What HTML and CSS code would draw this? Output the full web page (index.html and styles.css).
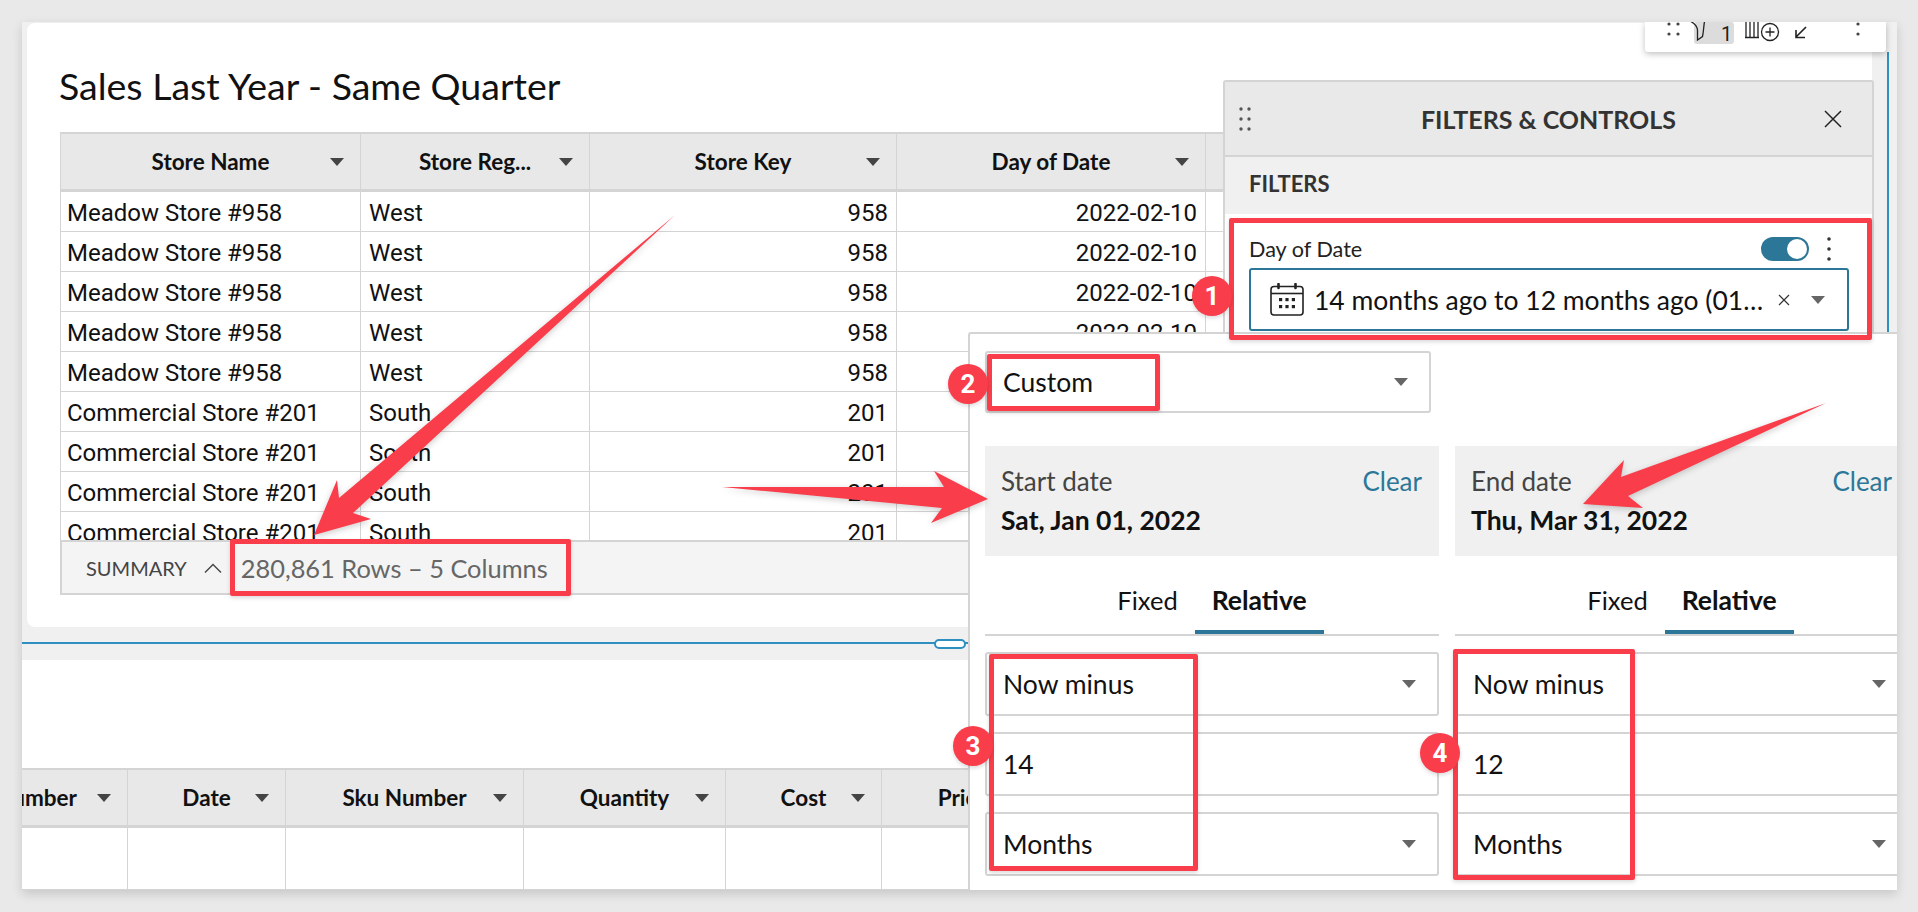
FILE: index.html
```html
<!DOCTYPE html>
<html lang="en">
  <head>
    <meta charset="UTF-8" />
    <title>Filters and controls</title>
    <link rel="stylesheet" href="styles.css">
  </head>
  <body>
    <div class="window">
      <div class="card">
        <h1 class="card-title">Sales Last Year - Same Quarter</h1>
        <div class="table-clip">
          <table class="grid grid-top">
            <thead>
              <tr>
                <th class="col-name">Store Name<i class="caret"></i></th>
                <th class="col-region">Store Reg...<i class="caret"></i></th>
                <th class="col-key">Store Key<i class="caret"></i></th>
                <th class="col-date">Day of Date<i class="caret"></i></th>
                <th></th>
              </tr>
            </thead>
            <tbody>
              <tr><td>Meadow Store #958</td><td>West</td><td class="num">958</td><td class="num">2022-02-10</td><td></td></tr>
              <tr><td>Meadow Store #958</td><td>West</td><td class="num">958</td><td class="num">2022-02-10</td><td></td></tr>
              <tr><td>Meadow Store #958</td><td>West</td><td class="num">958</td><td class="num">2022-02-10</td><td></td></tr>
              <tr><td>Meadow Store #958</td><td>West</td><td class="num">958</td><td class="num">2022-02-10</td><td></td></tr>
              <tr><td>Meadow Store #958</td><td>West</td><td class="num">958</td><td class="num">2022-02-10</td><td></td></tr>
              <tr><td>Commercial Store #201</td><td>South</td><td class="num">201</td><td class="num">2022-02-10</td><td></td></tr>
              <tr><td>Commercial Store #201</td><td>South</td><td class="num">201</td><td class="num">2022-02-10</td><td></td></tr>
              <tr><td>Commercial Store #201</td><td>South</td><td class="num">201</td><td class="num">2022-02-10</td><td></td></tr>
              <tr><td>Commercial Store #201</td><td>South</td><td class="num">201</td><td class="num">2022-02-10</td><td></td></tr>
            </tbody>
          </table>
        </div>
        <div class="summary">
          <span class="summary-label">SUMMARY</span>
          <svg class="summary-chevron" width="18" height="10" viewBox="0 0 18 10"><path d="M1 9.500 9 1.500l8 8" fill="none" stroke="#444" stroke-width="1.400"/></svg>
          <span class="summary-count">280,861 Rows – 5 Columns</span>
        </div>
      </div>

      <div class="divider">
        <div class="divider-line"></div>
        <div class="divider-handle"></div>
      </div>

      <div class="lower">
        <table class="grid grid-bottom">
          <thead>
            <tr>
              <th class="col-number">Number<i class="caret"></i></th>
              <th class="col-day">Date<i class="caret"></i></th>
              <th class="col-sku">Sku Number<i class="caret"></i></th>
              <th class="col-qty">Quantity<i class="caret"></i></th>
              <th class="col-cost">Cost<i class="caret"></i></th>
              <th class="col-price">Price<i class="caret"></i></th>
            </tr>
          </thead>
          <tbody>
            <tr><td></td><td></td><td></td><td></td><td></td><td></td></tr>
          </tbody>
        </table>
      </div>

      <div class="edge-line"></div>

      <div class="toolbar">
        <svg width="241" height="30" viewBox="0 0 241 30">
          <rect x="49" y="0" width="40" height="22" rx="3" fill="#dcdcdc"/>
          <g fill="#444">
            <circle cx="24" cy="2" r="1.600"/><circle cx="33" cy="2" r="1.600"/>
            <circle cx="24" cy="12" r="1.600"/><circle cx="33" cy="12" r="1.600"/>
            <circle cx="213" cy="2" r="1.600"/><circle cx="213" cy="12" r="1.600"/>
          </g>
          <g fill="none" stroke="#222" stroke-width="1.300">
            <path d="M43 -1c4 2 7 5 7.500 9v10l5-3.500c1-4 1-9 2-15" transform="translate(2 0)"/>
            <path d="M101 0v15M105 0v15M109 0v15M113 0v15M100 15.500h14"/>
            <circle cx="125" cy="10" r="8.500"/>
            <path d="M125 5.500v9M120.500 10h9"/>
            <path d="M161 5 151 15M151 8v7.500h9" stroke-width="1.600"/>
          </g>
          <text class="toolbar-count" x="76" y="19">1</text>
        </svg>
      </div>

      <div class="panel">
        <div class="panel-header">
          <svg class="grip" width="12" height="24" viewBox="0 0 12 24"><g fill="#555"><circle cx="2" cy="2" r="1.700"/><circle cx="10" cy="2" r="1.700"/><circle cx="2" cy="12" r="1.700"/><circle cx="10" cy="12" r="1.700"/><circle cx="2" cy="22" r="1.700"/><circle cx="10" cy="22" r="1.700"/></g></svg>
          <span class="panel-title">FILTERS &amp; CONTROLS</span>
          <svg class="panel-close" width="18" height="18" viewBox="0 0 18 18"><path d="M1 1l16 16M17 1 1 17" stroke="#222" stroke-width="1.500"/></svg>
        </div>
        <div class="panel-section">FILTERS</div>
        <div class="control">
          <div class="control-head">
            <span class="control-label">Day of Date</span>
            <span class="toggle"><span class="toggle-knob"></span></span>
            <svg class="kebab" width="6" height="24" viewBox="0 0 6 24"><g fill="#333"><circle cx="3" cy="2" r="1.800"/><circle cx="3" cy="12" r="1.800"/><circle cx="3" cy="22" r="1.800"/></g></svg>
          </div>
          <div class="control-select">
            <svg class="calendar" width="34" height="33" viewBox="0 0 34 33">
              <rect x="1" y="3.500" width="32" height="28.500" rx="3" fill="none" stroke="#222" stroke-width="1.600"/>
              <path d="M1 10.500h32" stroke="#222" stroke-width="1.600"/>
              <path d="M8.500 1v4M25.500 1v4" stroke="#222" stroke-width="2.600" stroke-linecap="round"/>
              <g fill="#222">
                <rect x="9" y="15" width="3.200" height="3.200"/><rect x="15.400" y="15" width="3.200" height="3.200"/><rect x="21.800" y="15" width="3.200" height="3.200"/>
                <rect x="9" y="22" width="3.200" height="3.200"/><rect x="15.400" y="22" width="3.200" height="3.200"/><rect x="21.800" y="22" width="3.200" height="3.200"/>
              </g>
            </svg>
            <span class="control-value">14 months ago to 12 months ago (01…</span>
            <svg class="control-clear" width="12" height="12" viewBox="0 0 12 12"><path d="M1 1l10 10M11 1 1 11" stroke="#333" stroke-width="1.200"/></svg>
            <i class="caret caret-soft control-caret"></i>
          </div>
        </div>
      </div>

      <div class="popover">
        <div class="select select-custom">Custom<i class="caret caret-soft"></i></div>
        <div class="range">
          <div class="range-col">
            <div class="date-box">
              <div class="date-box-head"><span class="date-label">Start date</span><span class="date-clear">Clear</span></div>
              <div class="date-value">Sat, Jan 01, 2022</div>
            </div>
            <div class="tabs"><span class="tab">Fixed</span><span class="tab tab-active">Relative</span></div>
            <div class="select">Now minus<i class="caret caret-soft"></i></div>
            <div class="select">14</div>
            <div class="select">Months<i class="caret caret-soft"></i></div>
          </div>
          <div class="range-col">
            <div class="date-box">
              <div class="date-box-head"><span class="date-label">End date</span><span class="date-clear">Clear</span></div>
              <div class="date-value">Thu, Mar 31, 2022</div>
            </div>
            <div class="tabs"><span class="tab">Fixed</span><span class="tab tab-active">Relative</span></div>
            <div class="select">Now minus<i class="caret caret-soft"></i></div>
            <div class="select">12</div>
            <div class="select">Months<i class="caret caret-soft"></i></div>
          </div>
        </div>
      </div>
    </div>

    <!-- annotations drawn over the screenshot -->
    <svg class="arrows" width="1918" height="912" viewBox="0 0 1918 912">
      <polygon points="675,215 353,513 371,519 314,535 337,480 339,498"/>
      <polygon points="722,487 944,487 934,471 988,499 931,523 942,508"/>
      <polygon points="1826,403 1628,496 1643,508 1583,504 1624,460 1621,477"/>
    </svg>
    <div class="mark mark-filter"></div>
    <div class="mark mark-summary"></div>
    <div class="mark mark-custom"></div>
    <div class="mark mark-start"></div>
    <div class="mark mark-end"></div>
    <div class="badge badge-1">1</div>
    <div class="badge badge-2">2</div>
    <div class="badge badge-3">3</div>
    <div class="badge badge-4">4</div>
  </body>
</html>
```

FILE: styles.css
```css
* {
  box-sizing: border-box;
}

html,
body {
  height: 912px;
  overflow: hidden;
}

body {
  margin: 0;
  position: relative;
  background: #e9e9e9;
  color: #111;
  font-family: "Lato", "Noto Sans", sans-serif;
}

.window {
  position: relative;
  margin: 22px 21px 0 22px;
  height: 868px;
  overflow: hidden;
  background: #f0f0f0;
  box-shadow: 0 4px 10px rgba(0, 0, 0, 0.15);
}

.card {
  margin: 1px 25px 0 5px;
  height: 604px;
  padding: 40px 22px 0 33px;
  background: #fff;
  border-radius: 8px;
}

.card-title {
  margin: 0 0 23px -1px;
  font-size: 37.500px;
  font-weight: 400;
  line-height: 46px;
}

.table-clip {
  height: 408px;
  overflow: hidden;
}

.grid {
  border-collapse: separate;
  border-spacing: 0;
  table-layout: fixed;
}

.grid th {
  position: relative;
  height: 60px;
  padding: 0;
  background: #e8e8e8;
  border-top: 2px solid #d4d4d4;
  border-right: 1px solid #d4d4d4;
  border-bottom: 3px solid #d4d4d4;
  font-size: 22.500px;
  font-weight: 700;
  text-align: center;
  white-space: nowrap;
}

.grid td {
  height: 40px;
  padding: 2px 8px 0 8px;
  background: #fff;
  border-right: 1px solid #d4d4d4;
  border-bottom: 1px solid #d4d4d4;
  font-family: "Roboto", sans-serif;
  font-size: 24px;
  white-space: nowrap;
}

.grid td:first-child {
  padding-left: 6px;
}

.grid-top {
  width: 1790px;
  border-left: 1px solid #d4d4d4;
}

.grid-top td.num {
  text-align: right;
}

.col-name { width: 300px; }
.col-region { width: 229px; }
.col-key { width: 307px; }
.col-date { width: 309px; }

.caret {
  position: absolute;
  top: 50%;
  right: 16px;
  margin-top: -4px;
  width: 0;
  height: 0;
  border-left: 7px solid transparent;
  border-right: 7px solid transparent;
  border-top: 8px solid #444;
}

.caret-soft {
  border-top-color: #666;
}

.summary {
  display: flex;
  align-items: center;
  height: 55px;
  padding-left: 24px;
  background: #f4f4f4;
  border: 2px solid #d4d4d4;
  border-right: none;
}

.summary-label {
  font-size: 20px;
  color: #444;
}

.summary-chevron {
  margin-left: 17px;
}

.summary-count {
  margin-left: 19px;
  font-size: 25.400px;
  color: #666;
}

.divider {
  position: relative;
  height: 33px;
  padding-top: 15px;
}

.divider-line {
  height: 2px;
  background: #2f8fc0;
}

.divider-handle {
  position: absolute;
  left: 912px;
  top: 12px;
  width: 32px;
  height: 10px;
  background: #fff;
  border: 2px solid #2f8fc0;
  border-radius: 5px;
}

.lower {
  height: 230px;
  padding-top: 108px;
  background: #fff;
}

.grid-bottom {
  width: 1100px;
  margin-left: -77px;
}

.grid-bottom td {
  height: 62px;
}

.col-number { width: 183px; }
.col-day { width: 158px; }
.col-sku { width: 238px; }
.col-qty { width: 202px; }
.col-cost { width: 156px; }
.col-price { width: 163px; }

.edge-line {
  position: absolute;
  top: 30px;
  left: 1865px;
  width: 2px;
  height: 290px;
  background: #2f8fc0;
}

.toolbar {
  position: absolute;
  top: 0;
  left: 1623px;
  width: 241px;
  height: 30px;
  background: #fff;
  border-radius: 0 0 3px 3px;
  box-shadow: 0 2px 6px rgba(0, 0, 0, 0.25);
}

.toolbar svg {
  display: block;
}

.toolbar-count {
  font-family: "Roboto", sans-serif;
  font-size: 20px;
  fill: #222;
}

.panel {
  position: absolute;
  top: 58px;
  left: 1201px;
  width: 651px;
  height: 260px;
  background: #fff;
  border: 2px solid #d4d4d4;
  border-bottom: none;
  border-radius: 3px 3px 0 0;
}

.panel-header {
  display: grid;
  grid-template-columns: 1fr auto 1fr;
  align-items: center;
  height: 75px;
  padding: 0 30px 0 30px;
  background: #e9e9e9;
  border-bottom: 2px solid #d4d4d4;
}

.grip {
  margin-left: -16px;
}

.panel-close {
  justify-self: end;
}

.panel-title {
  font-size: 25px;
  font-weight: 700;
  color: #333;
}

.panel-section {
  height: 57px;
  padding: 0 0 0 24px;
  background: #f0f0f0;
  font-size: 22px;
  font-weight: 700;
  line-height: 54px;
  color: #333;
}

.control {
  padding: 22px 23px 0 24px;
}

.control-head {
  display: flex;
  align-items: center;
  height: 26px;
  padding-right: 17px;
}

.control-label {
  flex: 1;
  font-size: 21.600px;
  color: #222;
}

.toggle {
  display: flex;
  justify-content: flex-end;
  align-items: center;
  width: 48px;
  height: 24px;
  padding-right: 2px;
  background: #2c7797;
  border-radius: 12px;
}

.toggle-knob {
  width: 20px;
  height: 20px;
  background: #fff;
  border-radius: 50%;
}

.kebab {
  margin-left: 17px;
}

.control-select {
  position: relative;
  display: flex;
  align-items: center;
  height: 63px;
  margin-top: 6px;
  padding-left: 19px;
  border: 2px solid #2c7797;
  border-radius: 3px;
}

.control-value {
  margin-left: 10px;
  font-size: 26.500px;
  white-space: nowrap;
}

.control-clear {
  position: absolute;
  left: 527px;
}

.control-caret {
  right: 22px;
}

.popover {
  position: absolute;
  top: 310px;
  left: 946px;
  right: 0;
  bottom: 0;
  overflow: hidden;
  padding: 17px 0 0 15px;
  background: #fff;
  border-top: 2px solid #d4d4d4;
  border-left: 2px solid #d4d4d4;
  border-radius: 3px 0 0 0;
}

.select {
  position: relative;
  display: flex;
  align-items: center;
  height: 64px;
  padding-left: 16px;
  border: 2px solid #d4d4d4;
  border-radius: 3px;
  font-size: 26.500px;
}

.select .caret {
  right: 21px;
}

.select-custom {
  width: 446px;
  height: 62px;
}

.range {
  display: flex;
  gap: 16px;
  width: 940px;
  margin-top: 33px;
}

.range-col {
  display: flex;
  flex-direction: column;
  gap: 16px;
  width: 454px;
}

.date-box {
  height: 110px;
  padding: 19px 17px 0 16px;
  background: #f0f0f0;
}

.date-box-head {
  display: flex;
  justify-content: space-between;
}

.date-label {
  font-size: 26px;
  color: #444;
}

.date-clear {
  font-size: 26px;
  color: #2c7797;
}

.date-value {
  margin-top: 7px;
  font-size: 26.500px;
  font-weight: 700;
}

.tabs {
  display: flex;
  justify-content: center;
  height: 64px;
  border-bottom: 2px solid #d4d4d4;
}

.tab {
  height: 62px;
  padding: 11px 17px 0;
  font-size: 25.500px;
  line-height: 34px;
}

.tab-active {
  font-size: 26.500px;
  font-weight: 700;
  border-bottom: 4px solid #2c7797;
}

/* annotation layer */
.arrows {
  position: absolute;
  top: 0;
  left: 0;
  fill: #f93d4a;
  filter: drop-shadow(0 2px 3px rgba(0, 0, 0, 0.2));
}

.mark {
  position: absolute;
  border: 5px solid #f93d4a;
  border-radius: 2px;
  box-shadow: 0 2px 4px rgba(0, 0, 0, 0.15);
}

.mark-filter { left: 1229px; top: 218px; width: 643px; height: 122px; }
.mark-summary { left: 230px; top: 539px; width: 341px; height: 57px; }
.mark-custom { left: 987px; top: 354px; width: 173px; height: 57px; }
.mark-start { left: 989px; top: 654px; width: 209px; height: 217px; }
.mark-end { left: 1453px; top: 649px; width: 182px; height: 231px; }

.badge {
  position: absolute;
  display: flex;
  align-items: center;
  justify-content: center;
  width: 40px;
  height: 40px;
  background: #f93d4a;
  border-radius: 50%;
  box-shadow: 0 2px 4px rgba(0, 0, 0, 0.15);
  color: #fff;
  font-family: "Roboto", sans-serif;
  font-size: 26px;
  font-weight: 700;
}

.badge-1 { left: 1192px; top: 276px; }
.badge-2 { left: 948px; top: 364px; }
.badge-3 { left: 953px; top: 726px; }
.badge-4 { left: 1420px; top: 733px; }
```
